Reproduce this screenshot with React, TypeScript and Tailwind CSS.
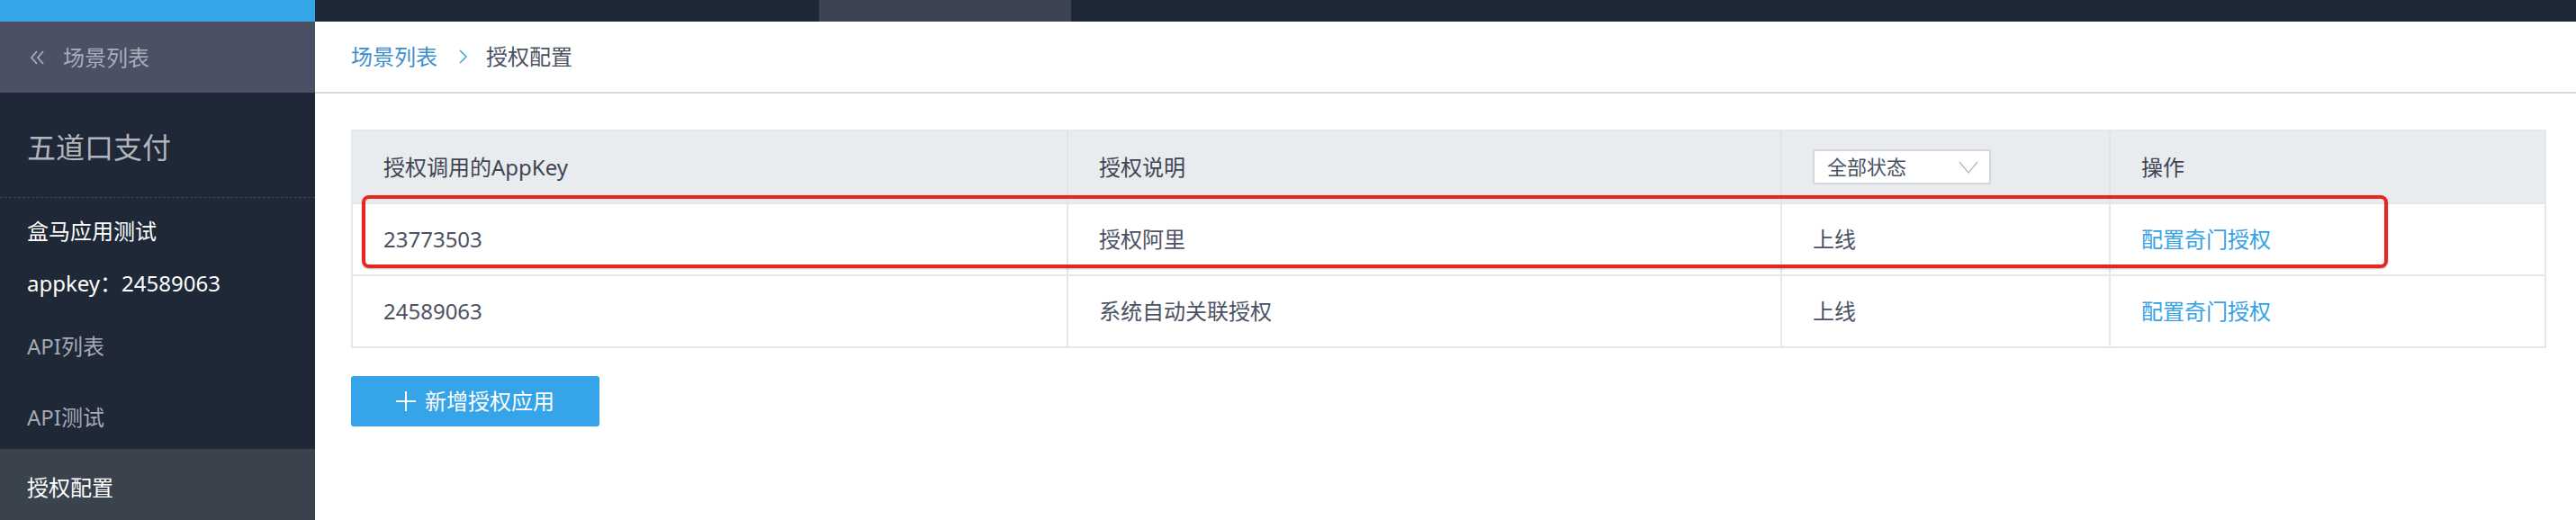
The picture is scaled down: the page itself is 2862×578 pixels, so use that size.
import React from "react";

const font = { fontFamily: '"Noto Sans", "Noto Sans CJK SC", sans-serif' };

function Row({ k, desc, status }: { k: string; desc: string; status: string }) {
  return (
    <div className="flex h-[80px] border-t-2 border-[#e6e7e9] text-[24px] text-[#4b5263]">
      <div className="w-[795px] flex items-center pl-[34px] border-r-2 border-[#e6e7e9]">{k}</div>
      <div className="w-[793px] flex items-center pl-[34px] border-r-2 border-[#e6e7e9]">{desc}</div>
      <div className="w-[365px] flex items-center pl-[34px] border-r-2 border-[#e6e7e9]">{status}</div>
      <div className="flex-1 flex items-center pl-[34px] text-[#35a1e6]">配置奇门授权</div>
    </div>
  );
}

export default function App() {
  return (
    <div className="w-[2862px] h-[578px] flex flex-col overflow-hidden bg-white relative" style={font}>
      <div className="h-[24px] flex shrink-0">
        <div className="w-[350px] bg-[#35a4e8]" />
        <div className="flex-1 bg-[#1e2938] flex">
          <div className="w-[560px]" />
          <div className="w-[280px] bg-[#3d4451]" />
        </div>
      </div>
      <div className="flex flex-1 min-h-0">
        <div className="w-[350px] bg-[#1e2837] flex flex-col shrink-0">
          <div className="h-[80px] bg-[#4b5064] flex items-center pl-[33px] pt-[2px] text-[24px] text-[#a9adb8]">
            <svg width="18" height="16" viewBox="0 0 18 16" className="mr-[19px]">
              <path d="M8 1 L2 8 L8 15 M15 1 L9 8 L15 15" fill="none" stroke="#a9adb8" strokeWidth="1.8" />
            </svg>
            场景列表
          </div>
          <div className="h-[119px] flex items-center pl-[30px] pt-[6px] text-[32px] text-[#b2b5bb] border-b border-dashed border-[#3e4757]">
            五道口支付
          </div>
          <div className="pt-[5px]">
            <div className="h-[58px] flex items-center pl-[30px] pt-[6px] text-[24px] text-white">盒马应用测试</div>
            <div className="h-[58px] flex items-center pl-[30px] pt-[6px] text-[24px] text-white">appkey：24589063</div>
          </div>
          <div className="h-[80px] flex items-center pl-[30px] pt-[8px] text-[24px] text-[#a5a9b1]">API列表</div>
          <div className="h-[80px] flex items-center pl-[30px] pt-[8px] text-[24px] text-[#a5a9b1]">API测试</div>
          <div className="h-[80px] flex items-center pl-[30px] pt-[6px] text-[24px] text-white bg-[#3a424d]">授权配置</div>
        </div>
        <div className="flex-1 flex flex-col">
          <div className="h-[80px] flex items-center pl-[40px] text-[24px] border-b-2 border-[#d5d7e1] shrink-0">
            <span className="text-[#3d8fcc]">场景列表</span>
            <svg width="12" height="16" viewBox="0 0 12 16" className="ml-[23px] mr-[19px]">
              <path d="M2 1 L9 8 L2 15" fill="none" stroke="#35a4e8" strokeWidth="1.5" />
            </svg>
            <span className="text-[#4b5263]">授权配置</span>
          </div>
          <div className="pl-[40px] pt-[40px]">
            <div className="w-[2439px] border-2 border-t-0 border-[#e6e7e9]">
              <div className="flex h-[81px] bg-[#e9ecef] border-t-2 border-[#e6e7e9] text-[24px] text-[#3f4553]">
                <div className="w-[795px] flex items-center pl-[34px] border-r-2 border-[#e1e3e6]">授权调用的AppKey</div>
                <div className="w-[793px] flex items-center pl-[34px] border-r-2 border-[#e1e3e6]">授权说明</div>
                <div className="w-[365px] flex items-center pl-[34px] border-r-2 border-[#e1e3e6]">
                  <div className="w-[198px] h-[39px] bg-white border-2 border-[#d3d6dc] rounded-[3px] flex items-center justify-between pl-[14px] pr-[12px] text-[22px] text-[#4b5263]">
                    全部状态
                    <svg width="22" height="14" viewBox="0 0 22 14">
                      <path d="M1 1 L11 13 L21 1" fill="none" stroke="#b4b8c0" strokeWidth="1.3" />
                    </svg>
                  </div>
                </div>
                <div className="flex-1 flex items-center pl-[34px]">操作</div>
              </div>
              <Row k="23773503" desc="授权阿里" status="上线" />
              <Row k="24589063" desc="系统自动关联授权" status="上线" />
            </div>
            <button className="mt-[31px] w-[276px] h-[56px] bg-[#35a4e8] rounded-[3px] flex items-center pl-[50px] text-[24px] text-white">
              <svg width="22" height="22" viewBox="0 0 22 22" className="mr-[10px]">
                <path d="M11 0 V22 M0 11 H22" stroke="white" strokeWidth="2" />
              </svg>
              新增授权应用
            </button>
          </div>
        </div>
      </div>
      <div className="absolute left-[402px] top-[217px] w-[2251px] h-[81px] border-[4px] border-[#e8261c] rounded-[8px] shadow-[0_1px_2px_rgba(0,0,0,0.3)]" />
    </div>
  );
}
